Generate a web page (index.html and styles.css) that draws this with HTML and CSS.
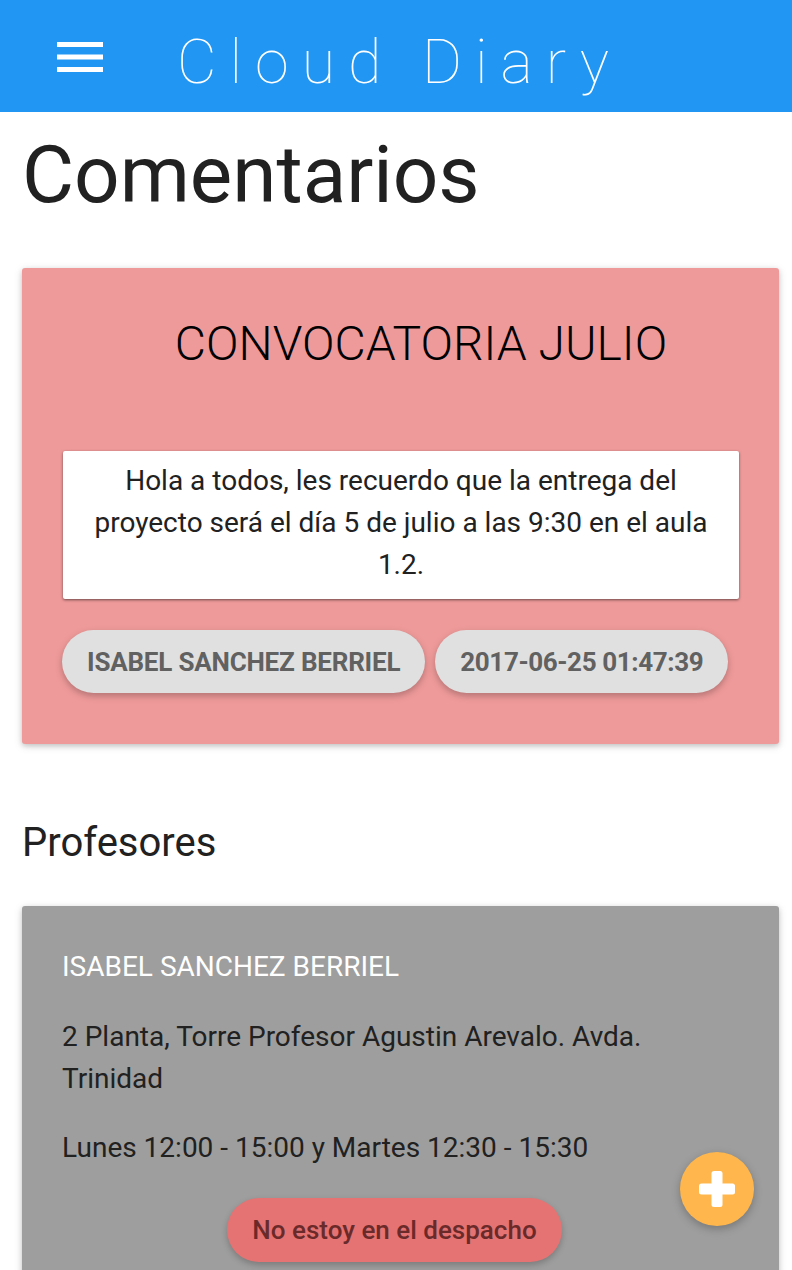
FILE: index.html
```html
<!DOCTYPE html>
<html lang="es">
<head>
<meta charset="utf-8">
<title>Cloud Diary</title>
<link rel="stylesheet" href="styles.css">
</head>
<body>
<header class="topbar">
  <button class="menu-btn" aria-label="Menú">
    <svg width="46" height="30" viewBox="0 0 46 30"><rect x="0" y="0" width="46" height="5" fill="#fff"/><rect x="0" y="12.5" width="46" height="5" fill="#fff"/><rect x="0" y="25" width="46" height="5" fill="#fff"/></svg>
  </button>
  <span class="brand">Cloud Diary</span>
</header>
<main class="content">
  <h1 class="page-title">Comentarios</h1>
  <section class="card card-pink">
    <h2 class="card-title">CONVOCATORIA JULIO</h2>
    <div class="message"><p>Hola a todos, les recuerdo que la entrega del proyecto será el día 5 de julio a las 9:30 en el aula 1.2.</p></div>
    <div class="chips">
      <span class="chip">ISABEL SANCHEZ BERRIEL</span>
      <span class="chip chip-date">2017-06-25 01:47:39</span>
    </div>
  </section>
  <h2 class="section-title">Profesores</h2>
  <section class="card card-grey">
    <h3 class="prof-name">ISABEL SANCHEZ BERRIEL</h3>
    <p class="prof-line">2 Planta, Torre Profesor Agustin Arevalo. Avda. Trinidad</p>
    <p class="prof-line">Lunes 12:00 - 15:00 y Martes 12:30 - 15:30</p>
    <div class="status-row"><span class="status-btn">No estoy en el despacho</span></div>
  </section>
</main>
<button class="fab" aria-label="Añadir">
  <svg width="36" height="36" viewBox="0 0 36 36"><rect x="12.5" y="0" width="11" height="36" rx="2.5" fill="#fff"/><rect x="0" y="12.5" width="36" height="11" rx="2.5" fill="#fff"/></svg>
</button>
</body>
</html>
```

FILE: styles.css
```css
html, body {
  margin: 0;
  padding: 0;
  background: #fff;
  font-family: Roboto, "Noto Sans", sans-serif;
  color: #212121;
  overflow: hidden;
}

.topbar {
  height: 112px;
  background: #2196F3;
  display: flex;
  align-items: center;
  padding-left: 57px;
  box-sizing: border-box;
}

.menu-btn {
  background: none;
  border: 0;
  padding: 0;
  margin: 1px 0 0;
  display: flex;
  width: 46px;
  height: 30px;
}

.brand {
  margin-left: 74px;
  margin-top: 13px;
  font-family: Roboto, sans-serif;
  font-weight: 100;
  font-size: 61px;
  letter-spacing: 13px;
  color: #fff;
  line-height: 1;
}

.content {
  padding: 0 13px 0 22px;
}

.page-title {
  margin: 23px 0 53px;
  font-size: 80px;
  font-weight: 400;
  line-height: 1;
  color: #212121;
}

.card {
  border-radius: 3px;
  box-shadow: 0 2px 5px rgba(0,0,0,0.16), 0 2px 10px rgba(0,0,0,0.12);
  box-sizing: border-box;
}

.card-pink {
  background: #EF9A9A;
  padding: 52px 40px 51px 41px;
}

.card-title {
  margin: 0 0 83px;
  padding-left: 40px;
  text-align: center;
  font-weight: 300;
  font-size: 48px;
  line-height: 1;
  color: #000;
}

.message {
  background: #fff;
  box-shadow: 0 1px 3px rgba(0,0,0,0.55);
  border-radius: 2px;
  padding: 9px 20px 13px;
  text-align: center;
}

.message p {
  margin: 0;
  font-size: 28px;
  line-height: 42px;
  color: #212121;
}

.chips {
  display: flex;
  gap: 10px;
  margin-top: 31px;
  margin-left: -1px;
}

.chip {
  flex: none;
  white-space: nowrap;
  display: inline-flex;
  align-items: center;
  justify-content: center;
  height: 63px;
  padding: 0 25px;
  border-radius: 32px;
  background: #E0E0E0;
  color: #616161;
  font-weight: 700;
  font-size: 26px;
  letter-spacing: -0.2px;
  box-shadow: 0 3px 7px rgba(0,0,0,0.25);
}

.chip-date {
  letter-spacing: -0.4px;
}

.section-title {
  margin: 79px 0 43px;
  font-size: 40px;
  font-weight: 400;
  line-height: 1;
  color: #212121;
}

.card-grey {
  background: #9E9E9E;
  padding: 44px 40px 40px 40px;
  min-height: 400px;
}

.prof-name {
  margin: 0 0 32px;
  font-size: 28px;
  font-weight: 400;
  line-height: 34px;
  color: #fff;
}

.prof-line {
  margin: 0 0 27px;
  font-size: 28px;
  line-height: 42px;
  color: #212121;
}

.status-row {
  display: flex;
  justify-content: center;
  padding-right: 12px;
  margin-top: 29px;
}

.status-btn {
  display: inline-flex;
  align-items: center;
  height: 64px;
  padding: 0 25px;
  border-radius: 32px;
  background: #E57373;
  color: #6a2a2a;
  font-weight: 500;
  font-size: 26px;
  white-space: nowrap;
  box-shadow: 0 3px 6px rgba(0,0,0,0.22);
}

.fab {
  position: fixed;
  left: 680px;
  top: 1152px;
  width: 74px;
  height: 74px;
  border-radius: 50%;
  border: 0;
  padding: 0;
  background: #FFB74D;
  display: flex;
  align-items: center;
  justify-content: center;
  box-shadow: 0 3px 8px rgba(0,0,0,0.25);
}
```
